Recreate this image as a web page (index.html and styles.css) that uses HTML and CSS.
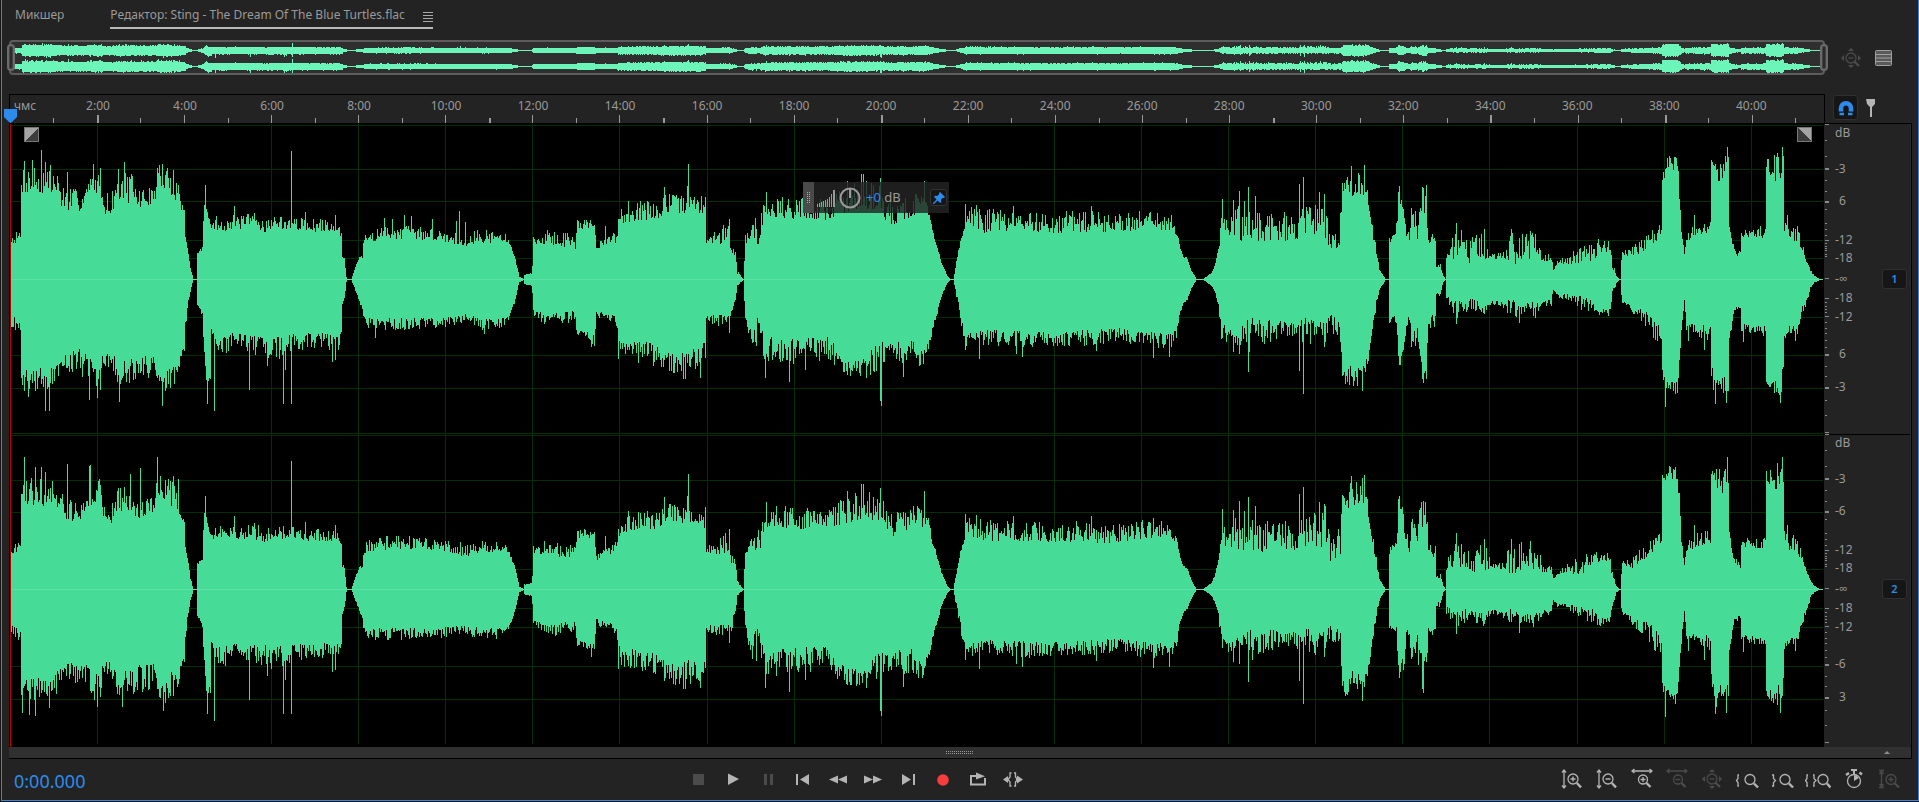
FILE: index.html
```html
<!DOCTYPE html>
<html lang="ru">
<head>
<meta charset="utf-8">
<title>Sting - The Dream Of The Blue Turtles.flac</title>
<link rel="stylesheet" href="styles.css">
</head>
<body>
<svg class="defs" aria-hidden="true">
  <symbol id="lens" viewBox="0 0 24 24"><circle cx="13" cy="12" r="5"/><path class="handle" d="M16.800 16L21 20.300"/></symbol>
  <symbol id="all-ways" viewBox="0 0 24 24">
    <circle cx="12" cy="12" r="5"/><path d="M9.500 12h5"/><path class="handle" d="M15.500 15.700L20 20"/>
    <path class="solid" d="M12 2l3 3H9zM12 22l3-3H9zM2 12l3-3v6zM22 12l-3-3v6z"/>
  </symbol>
</svg>
<main class="window">
  <nav class="tabs">
    <a class="tab" href="#mixer">Микшер</a>
    <div class="tab-active">
      <a class="tab" href="#editor">Редактор: Sting - The Dream Of The Blue Turtles.flac</a>
      <button class="plain" aria-label="Меню панели"><svg class="menu-icon" viewBox="0 0 10 12"><path d="M0 2.500h10M0 5.500h10M0 8.500h10M0 11.500h10"/></svg></button>
    </div>
  </nav>

  <section class="columns overview-row">
    <div class="overview">
      <svg class="overview-wave" viewBox="0 0 1814 31" preserveAspectRatio="none"><path id="mini1"/><path id="mini2"/></svg>
      <span class="grip grip-left"></span><span class="grip grip-right"></span>
    </div>
    <div class="overview-tools">
      <button class="plain dim" aria-label="Показать всё"><svg class="icon" viewBox="0 0 24 24"><use href="#all-ways"/></svg></button>
      <button class="plain" aria-label="Список"><svg class="list-icon" viewBox="0 0 17 16"><rect x=".5" y=".5" width="16" height="15" rx="1"/><path d="M0 4.500h17M0 8h17M0 11.500h17"/></svg></button>
    </div>
  </section>

  <section class="columns ruler-row">
    <div class="ruler">
      <ol class="times" id="times"><li class="unit">чмс</li></ol>
      <svg class="ticks" viewBox="0 0 1814 8" preserveAspectRatio="none"><path id="ticks"/></svg>
      <svg class="playhead" viewBox="0 0 13 14"><path d="M0 0h13v8l-6 6h-1l-6-6z"/></svg>
    </div>
    <div class="ruler-tools">
      <button class="magnet" aria-label="Привязка"><svg viewBox="0 0 16 16"><path class="arc" d="M3 11.500V8.200a5 5 0 0 1 10 0v3.300"/><path class="feet" d="M1.500 14h4.500M10 14h4.500"/></svg></button>
      <button class="plain" aria-label="Маркер"><svg class="marker" viewBox="0 0 9 18"><path d="M0 0h9v5l-3 3v10h-2v-10l-3-3z"/></svg></button>
    </div>
  </section>

  <section class="columns tracks">
    <div class="plot">
      <svg class="channel" viewBox="0 0 1814 310" preserveAspectRatio="none"><path class="grid" id="grid1"/><path class="wave" id="wave1"/><path class="axis" d="M1 155h1813v1H1z"/></svg>
      <svg class="channel" viewBox="0 0 1814 310" preserveAspectRatio="none"><path class="grid" id="grid2"/><path class="wave" id="wave2"/><path class="axis" d="M1 155h1813v1H1z"/></svg>
      <span class="cursor"></span>
      <button class="fade fade-in" aria-label="Нарастание"></button>
      <button class="fade fade-out" aria-label="Затухание"></button>
      <div class="hud">
        <span class="hud-grip"><i></i></span>
        <svg class="bars" viewBox="0 0 18 18"><path d="M0 15h1v3H0zM2 14h1v4H2zM4 13h1v5H4zM6 12h1v6H6zM8 11h1v7H8zM10 10h1v8h-1zM12 8h1v10h-1zM14 5h1v13h-1zM16 1h2v17h-2z"/></svg>
        <svg class="knob" viewBox="0 0 22 22"><circle cx="11" cy="11" r="9.500"/><path d="M11 2v9"/></svg>
        <span class="gain"><b>+0</b> dB</span>
        <button class="pin" aria-label="Закрепить"><svg viewBox="0 0 12 12"><path d="M7 0l5 5-1 1-1-.3-2 2.100.2 2.200-1 1-2.600-2.500L1 12H0v-1l3.500-3.600L1 4.800l1-1 2.200.2 2.100-2L6 1z"/></svg></button>
      </div>
    </div>
    <div class="scales">
      <div class="scale">
        <svg class="db-ticks" viewBox="0 0 6 310" preserveAspectRatio="none"><path id="db1"/></svg>
        <ul><li>dB<li>-3<li class="bare">6<li>-12<li>-18<li>-∞<li>-18<li>-12<li class="bare">6<li>-3</ul>
        <button class="badge">1</button>
      </div>
      <div class="scale">
        <svg class="db-ticks" viewBox="0 0 6 310" preserveAspectRatio="none"><path id="db2"/></svg>
        <ul><li>dB<li>-3<li>-6<li>-12<li>-18<li>-∞<li>-18<li>-12<li>-6<li class="bare">3</ul>
        <button class="badge">2</button>
      </div>
    </div>
  </section>
  <div class="splitter"><i class="dots"></i><svg class="caret" viewBox="0 0 6 3"><path d="M0 3l3-3 3 3z"/></svg></div>

  <footer class="footer">
    <output class="time">0:00.000</output>
    <div class="buttons">
      <button class="plain dim" aria-label="Стоп"><svg class="icon" viewBox="0 0 24 24"><path class="solid" d="M7 7h11v11H7z"/></svg></button>
      <button class="plain" aria-label="Воспроизвести"><svg class="icon" viewBox="0 0 24 24"><path class="solid" d="M7 6.500l11 5.500-11 6z"/></svg></button>
      <button class="plain dim" aria-label="Пауза"><svg class="icon" viewBox="0 0 24 24"><path class="solid" d="M8 7h3v11H8zM14 7h3v11h-3z"/></svg></button>
      <button class="plain" aria-label="В начало"><svg class="icon" viewBox="0 0 24 24"><path class="solid" d="M5 7h2v11H5zM18 7v11l-9-5.500z"/></svg></button>
      <button class="plain" aria-label="Назад"><svg class="icon" viewBox="0 0 24 24"><path class="solid" d="M12 8.500v8l-9-4zM21 8.500v8l-9-4z"/></svg></button>
      <button class="plain" aria-label="Вперёд"><svg class="icon" viewBox="0 0 24 24"><path class="solid" d="M3 8.500v8l9-4zM12 8.500v8l9-4z"/></svg></button>
      <button class="plain" aria-label="В конец"><svg class="icon" viewBox="0 0 24 24"><path class="solid" d="M6 7v11l9-5.500zM17 7h2v11h-2z"/></svg></button>
      <button class="plain record" aria-label="Запись"><svg class="icon" viewBox="0 0 24 24"><circle class="solid" cx="12" cy="13" r="5.800"/></svg></button>
      <button class="plain" aria-label="Повтор"><svg class="icon" viewBox="0 0 24 24"><path class="thick" d="M8 9H5v8.500h14V11"/><path class="thick" d="M8 9h4"/><path class="solid" d="M10 5.500l9 3.700-9 3.300z"/></svg></button>
      <button class="plain" aria-label="Пропуск выделения"><svg class="icon" viewBox="0 0 24 24"><path d="M10.500 6H9v4l-2 2.500 2 2.500v4h1.500M13 6h1.500v4l2 2.500-2 2.500v4H13"/><path class="solid" d="M2 12.500L7 9v7zM22 12.500L16 8.500v3h-1v2h1v3z"/></svg></button>
    </div>
    <div class="buttons zooms">
      <button class="plain" aria-label="Увеличить амплитуду"><svg class="icon" viewBox="0 0 24 24"><path d="M4 3v18M2 5.500L4 3l2 2.500M2 18.500L4 21l2-2.500M10.500 12h5M13 9.500v5"/><use href="#lens"/></svg></button>
      <button class="plain" aria-label="Уменьшить амплитуду"><svg class="icon" viewBox="0 0 24 24"><path d="M4 3v18M2 5.500L4 3l2 2.500M2 18.500L4 21l2-2.500M10.500 12h5"/><use href="#lens"/></svg></button>
      <button class="plain" aria-label="Увеличить время"><svg class="icon" viewBox="0 0 24 24"><path d="M2 4h20M4.500 2L2 4l2.500 2M19.500 2L22 4l-2.500 2M10.500 12.500h5M13 10v5"/><circle cx="13" cy="12.500" r="4.500"/><path class="handle" d="M16.500 16l4 4"/></svg></button>
      <button class="plain dim" aria-label="Уменьшить время"><svg class="icon" viewBox="0 0 24 24"><path d="M2 4h20M4.500 2L2 4l2.500 2M19.500 2L22 4l-2.500 2M10.500 12.500h5"/><circle cx="13" cy="12.500" r="4.500"/><path class="handle" d="M16.500 16l4 4"/></svg></button>
      <button class="plain dim" aria-label="Показать целиком"><svg class="icon" viewBox="0 0 24 24"><use href="#all-ways"/></svg></button>
      <button class="plain" aria-label="К началу выделения"><svg class="icon" viewBox="0 0 24 24"><path d="M4 8H3v3.500l-1.500 2L3 15.500V19h1"/><circle cx="15" cy="12.500" r="5"/><path class="handle" d="M19 16.500l4 4"/></svg></button>
      <button class="plain" aria-label="К концу выделения"><svg class="icon" viewBox="0 0 24 24"><path d="M2 8h1.500v3.500l2 2-2 2V19H2"/><circle cx="15" cy="12.500" r="5"/><path class="handle" d="M19 16.500l4 4"/></svg></button>
      <button class="plain" aria-label="К выделению"><svg class="icon wide-icon" viewBox="0 0 26 24"><path d="M3 8H2v3.500l-1.500 2L2 15.500V19h1M8 8h1v3.500l2 2-2 2V19H8"/><circle cx="18" cy="12.500" r="5"/><path class="handle" d="M22 16.500l3.500 4"/></svg></button>
      <button class="plain" aria-label="Таймер"><svg class="icon" viewBox="0 0 24 24"><circle cx="12" cy="14" r="6.500"/><path class="solid" d="M12 14V8a6 6 0 0 1 5 3zM9 2h6v2h-2v3h-2V4H9z"/><path class="handle" d="M4 8l3-2M17.500 5.500l2.500 2"/></svg></button>
      <button class="plain dim" aria-label="Масштаб по высоте"><svg class="icon" viewBox="0 0 24 24"><path d="M2 3.500h5M2 20.500h5M4.500 3.500v17M2.500 7l2-2.500 2 2.500M2.500 17l2 2.500 2-2.500M11.500 12.500h5M14 10v5"/><circle cx="14" cy="12.500" r="5"/><path class="handle" d="M17.800 16.500L22 20.500"/></svg></button>
    </div>
  </footer>
</main>
<script src="app.js"></script>
</body>
</html>
```
FILE: styles.css
```css
* { box-sizing: border-box; }
body {
  margin: 0;
  background: #161616;
  color: #9a9a9a;
  font: 12px/16px "Noto Sans", "Open Sans", sans-serif;
}
svg { display: block; }
button { padding: 0; border: 0; background: none; color: inherit; font: inherit; }
ul, ol { margin: 0; padding: 0; list-style: none; }
.defs { display: none; }

.window {
  display: flex;
  flex-direction: column;
  height: calc(100vh - 1px);
  min-height: 480px;
  margin-left: 1px;
  border: solid #3a84dc;
  border-width: 0 1px 1px;
  background: #232323;
}
.plain { display: flex; color: #b4b4b4; }
.dim { color: #4b4b4b; }
.icon { width: 24px; height: 24px; fill: none; stroke: currentColor; stroke-width: 1.3; }
.wide-icon { width: 26px; }
.solid { fill: currentColor; stroke: none; }
.handle { stroke-width: 2.4; }
.thick { stroke-width: 2; }

.tabs { display: flex; gap: 46px; height: 29px; padding: 7px 13px 0; }
.tab { color: inherit; text-decoration: none; white-space: nowrap; }
.tab-active { display: flex; gap: 18px; border-bottom: 2px solid #b8b8b8; }
.menu-icon { width: 10px; height: 12px; margin-top: 3px; stroke: #a8a8a8; }

.columns { display: grid; grid-template-columns: minmax(0, 1fr) 87px; margin: 0 6px 0 7px; }

.overview-row { margin-top: 11px; height: 35px; }
.overview {
  position: relative;
  border: 2px solid #5c5c5c;
  border-radius: 4px;
  background: #2f2f2f;
}
.overview-wave { width: 100%; height: 100%; fill: #6cf5b8; shape-rendering: crispEdges; }
.grip {
  position: absolute;
  top: 2px;
  bottom: 2px;
  width: 8px;
  border: 2px solid #6b6b6b;
  border-radius: 4px;
  background: #2b2b2b;
  box-shadow: inset 0 0 0 1px #444;
}
.grip-left { left: -4px; }
.grip-right { right: -5px; }
.overview-tools { display: flex; align-items: center; gap: 12px; padding-left: 14px; }
.list-icon { width: 17px; height: 16px; fill: #5a5a5a; stroke: #a0a0a0; }

.ruler-row { margin-top: 19px; height: 29px; }
.ruler { position: relative; display: flex; flex-direction: column; justify-content: space-between; border: 1px solid #000; border-bottom: 0; }
.times { display: flex; padding: 3px 0 0 1px; overflow: hidden; }
.times li { flex: 0 0 4.8%; text-align: center; }
.times .unit { flex-basis: 2.4%; padding-left: 3px; text-align: left; }
.ticks { width: 100%; height: 8px; fill: #9a9a9a; shape-rendering: crispEdges; }
.playhead { position: absolute; left: -6px; bottom: 0; width: 13px; height: 14px; fill: #2d8ceb; }
.ruler-tools { display: flex; gap: 8px; padding: 1px 0 0 8px; }
.magnet {
  display: grid;
  place-items: center;
  width: 25px;
  height: 25px;
  border: 1px solid #303030;
  border-radius: 3px;
  background: #161616;
}
.magnet svg { width: 16px; height: 16px; fill: none; stroke: #2d8ceb; }
.arc { stroke-width: 4.6; }
.feet { stroke-width: 2.4; }
.marker { width: 9px; height: 18px; margin-top: 4px; fill: #b4b4b4; }

.tracks { flex: 1; min-height: 0; border-top: 1px solid #000; border-right: 1px solid #000; }
.plot {
  position: relative;
  display: grid;
  grid-template-rows: minmax(0, 1fr) minmax(0, 1fr);
  padding: 0 1px 3px;
  background: #000;
}
.channel { width: 100%; height: 100%; shape-rendering: crispEdges; }
.grid { fill: #033003; }
.wave { fill: #46dc98; }
.axis { fill: #5be0a5; }
.cursor { position: absolute; top: 0; bottom: 0; left: 1px; width: 1px; background: #c00000; }
.fade { position: absolute; top: 3px; width: 15px; height: 15px; border: 1px solid #777; }
.fade-in { left: 15px; background: linear-gradient(135deg, #a4a4a4 50%, #3c3c3c 50%); }
.fade-out { right: 12px; background: linear-gradient(45deg, #3c3c3c 50%, #a4a4a4 50%); }
.hud {
  position: absolute;
  top: 58px;
  left: 43.75%;
  display: flex;
  align-items: center;
  width: 146px;
  height: 31px;
  background: rgba(36, 36, 36, .82);
}
.hud-grip { display: grid; place-items: center; align-self: stretch; width: 11px; margin-right: 3px; background: #4a4a4a; }
.hud-grip i {
  width: 3px;
  height: 12px;
  background: repeating-linear-gradient(#aaa 0 1px, transparent 1px 2px) left / 1px 100% no-repeat, repeating-linear-gradient(#aaa 0 1px, transparent 1px 2px) right / 1px 100% no-repeat;
}
.bars { width: 18px; height: 18px; margin-right: 4px; fill: #9a9a9a; }
.knob { width: 22px; height: 22px; margin-right: 5px; fill: none; stroke: #9a9a9a; stroke-width: 2; }
.gain { flex: 1; padding-bottom: 2px; font-size: 13px; }
.gain b { color: #2d8ceb; font-weight: 400; }
.pin { display: grid; place-items: center; width: 17px; height: 17px; margin-right: 2px; border: 1px solid #333; border-radius: 3px; background: #161616; }
.pin svg { width: 12px; height: 12px; fill: #2d8ceb; }

.scales { display: grid; grid-template-rows: minmax(0, 1fr) minmax(0, 1fr); padding-bottom: 3px; }
.scale { display: grid; grid-template-columns: 6px 1fr auto; border-right: 1px solid #2c2c2c; }
.scale + .scale { background: linear-gradient(#000, #000) top / 100% 1px no-repeat; }
.db-ticks { width: 6px; height: 100%; fill: #8a8a8a; shape-rendering: crispEdges; }
.scale ul {
  display: grid;
  grid-template-rows: 1fr 16px 20fr 16px 16fr 16px 23fr 16px 2fr 16px 5fr 16px 3fr 16px 3fr 16px 22fr 16px 17fr 16px 39fr;
  padding-left: 5px;
}
.scale li:nth-child(1) { grid-row: 2; }
.scale li:nth-child(2) { grid-row: 4; }
.scale li:nth-child(3) { grid-row: 6; }
.scale li:nth-child(4) { grid-row: 8; }
.scale li:nth-child(5) { grid-row: 10; }
.scale li:nth-child(6) { grid-row: 12; }
.scale li:nth-child(7) { grid-row: 14; }
.scale li:nth-child(8) { grid-row: 16; }
.scale li:nth-child(9) { grid-row: 18; }
.scale li:nth-child(10) { grid-row: 20; }
.scale .bare { padding-left: 4px; }
.badge {
  align-self: center;
  width: 25px;
  height: 20px;
  margin-right: 3px;
  border: 1px solid #303030;
  border-radius: 3px;
  background: #161616;
  color: #2d8ceb;
  font-weight: 600;
  font-size: 11px;
}

.splitter {
  display: grid;
  grid-template-columns: 1fr 28px 1fr;
  align-items: center;
  height: 12px;
  margin: 0 6px 0 7px;
  border: solid #000;
  border-width: 0 1px 1px 0;
  background: #303030;
}
.dots {
  grid-column: 2;
  height: 3px;
  background: repeating-linear-gradient(90deg, #999 0 1px, transparent 1px 2px) top / 100% 1px no-repeat, repeating-linear-gradient(90deg, #999 0 1px, transparent 1px 2px) bottom / 100% 1px no-repeat;
}
.caret { width: 6px; height: 3px; margin-right: 21px; justify-self: end; fill: #8c8c8c; }

.footer { display: grid; grid-template-columns: 36% auto 1fr; align-items: center; height: 41px; padding: 0 17px 2px 0; }
.time { padding: 4px 0 0 12px; color: #2d8ceb; font-size: 18px; line-height: 24px; }
.buttons { display: flex; gap: 11px; }
.zooms { justify-content: flex-end; }
.record { color: #f83c3c; }
```
FILE: app.js
```js
// Envelope of the recording: [x, top low, top high, bottom low, bottom high]
const envelope = [
  [11,35,45,36,48],[20,37,50,38,52],[21,85,115,88,112],[50,82,116,88,110],[58,82,105,80,105],[62,68,96,76,90],[80,68,88,68,95],
  [88,82,100,76,104],[100,88,112,86,118],[103,65,85,70,85],[112,66,90,72,90],[116,78,112,80,106],[130,76,108,80,106],
  [138,70,92,74,102],[154,76,92,74,104],[157,88,116,94,110],[164,88,114,94,116],[172,80,108,80,108],[178,78,100,84,98],
  [181,68,80,72,76],[184,66,70,66,72],[185,42,48,40,50],[188,24,26,20,24],[190,10,12,10,12],[193,0,0,0,0],[196,0,0,0,0],
  [197,24,28,22,26],[202,28,32,32,38],[203,55,60,55,60],[205,92,94,84,92],[206,70,72,100,104],[210,52,56,96,104],[211,50,56,48,52],
  [215,48,64,56,78],[226,48,62,56,76],[234,50,64,52,62],[250,50,66,55,74],[266,46,62,54,76],[272,50,64,58,84],[290,50,62,54,74],
  [320,46,60,52,68],[338,49,60,54,74],[341,40,50,52,55],[342,22,26,24,26],[344,20,22,16,20],[346,2,2,2,2],[347,0,0,0,0],
  [351,0,0,0,0],[356,14,16,12,14],[360,22,24,22,26],[362,20,22,28,29],[363,34,38,36,40],[366,36,48,38,50],[390,40,54,38,52],
  [410,40,54,38,50],[440,38,50,38,48],[464,32,46,34,44],[480,36,50,38,50],[503,36,48,38,48],[508,36,40,36,40],[514,22,25,22,25],
  [517,10,12,8,10],[519,2,2,2,2],[523,0,0,0,0],[524,4,5,4,5],[531,5,6,5,6],[532,12,13,13,14],[533,35,45,30,36],[548,34,50,34,48],
  [575,30,46,30,42],[577,56,74,54,58],[579,50,60,50,56],[594,51,60,54,66],[596,28,34,28,38],[606,34,44,32,40],[616,35,48,34,46],
  [618,50,58,50,58],[620,56,72,58,76],[640,58,80,60,84],[659,60,76,64,88],[664,66,86,70,92],[680,66,84,72,98],[700,66,84,66,92],
  [705,58,82,60,78],[706,36,42,35,42],[717,34,50,34,48],[728,36,58,34,46],[731,24,40,26,44],[735,24,28,20,22],[737,5,10,4,8],
  [740,3,4,2,3],[743,0,0,0,0],[745,35,45,35,45],[752,40,60,50,72],[758,34,66,30,72],[762,40,70,50,70],[764,62,88,56,90],
  [790,60,82,58,84],[830,58,82,56,80],[838,64,90,74,96],[862,70,100,80,98],[880,66,94,60,92],[890,52,80,64,80],[910,60,84,56,86],
  [918,66,92,72,92],[927,58,80,66,86],[931,50,66,56,64],[933,44,52,46,50],[938,30,32,30,34],[942,16,18,15,17],[948,3,3,3,3],
  [951,0,0,0,0],[954,0,0,0,0],[957,14,18,12,18],[960,30,35,26,34],[964,45,52,48,60],[967,54,72,54,68],[985,46,72,50,66],
  [1008,48,68,50,68],[1050,46,68,52,68],[1090,46,68,50,66],[1120,46,66,48,62],[1150,50,72,52,70],[1172,48,66,54,68],
  [1177,44,54,48,60],[1180,32,38,34,38],[1184,22,24,22,24],[1188,19,21,18,20],[1192,8,9,8,9],[1197,0,0,0,0],[1204,0,0,0,0],
  [1212,6,6,5,6],[1216,14,16,13,15],[1219,26,34,23,26],[1222,42,64,40,62],[1235,42,76,50,66],[1250,34,70,38,74],[1270,38,68,40,62],
  [1294,38,68,42,56],[1306,42,72,38,66],[1326,40,84,42,64],[1330,26,56,32,50],[1341,34,66,42,66],[1343,90,98,88,98],[1346,80,104,90,106],
  [1353,82,112,80,110],[1363,84,112,84,106],[1367,84,100,78,92],[1370,66,72,70,75],[1373,45,60,48,55],[1376,28,40,22,34],
  [1380,9,11,9,11],[1386,0,0,0,0],[1389,0,0,0,0],[1390,34,42,36,48],[1397,34,58,35,46],[1399,76,92,72,90],[1404,66,82,68,88],
  [1406,46,60,44,60],[1410,32,50,32,50],[1412,58,76,48,76],[1418,38,64,44,62],[1420,60,90,60,90],[1427,62,98,66,104],
  [1429,36,46,38,50],[1436,30,44,32,50],[1437,11,16,14,16],[1441,10,15,10,18],[1444,3,4,2,3],[1446,0,0,0,0],[1447,18,24,16,26],
  [1450,18,40,18,30],[1458,18,54,22,40],[1470,16,40,18,30],[1484,18,50,22,36],[1492,20,26,20,24],[1502,20,26,20,28],[1510,14,46,18,36],
  [1524,16,48,20,38],[1538,20,46,22,38],[1543,16,26,20,26],[1552,18,26,19,26],[1554,8,11,9,11],[1558,15,18,13,18],[1572,15,28,14,22],
  [1582,15,34,15,30],[1596,20,38,20,34],[1600,26,42,28,36],[1610,28,38,26,36],[1613,10,18,10,18],[1617,2,4,2,3],[1620,0,0,0,0],
  [1621,0,0,0,0],[1622,14,20,14,20],[1623,24,28,20,24],[1634,20,34,26,36],[1645,28,44,30,48],[1656,36,56,38,62],[1662,46,60,50,66],
  [1663,94,114,90,100],[1667,108,122,100,112],[1678,108,122,100,114],[1680,76,100,75,86],[1682,46,52,48,54],[1685,22,26,18,22],
  [1687,38,46,44,50],[1698,42,58,44,56],[1711,46,58,46,62],[1712,112,124,84,100],[1716,108,122,100,122],[1720,90,120,94,110],
  [1729,104,126,92,122],[1730,48,60,56,62],[1735,26,32,28,32],[1741,20,28,24,32],[1742,42,50,44,52],[1765,40,54,46,56],
  [1766,48,54,50,56],[1767,102,122,100,110],[1776,98,124,100,114],[1784,102,128,86,122],[1785,48,60,54,60],[1790,38,58,46,54],
  [1798,36,54,46,56],[1803,26,36,26,36],[1808,15,18,18,24],[1811,7,9,6,8],[1815,3,4,2,3],[1820,0,0,0,0],[1824,0,0,0,0]
];

// Single peaks: [x, top, bottom]; zero leaves the envelope as it is
const peaks = [
  [24,118,0],[28,0,117],[32,119,0],[41,129,0],[45,117,131],[49,108,131],[67,107,0],[93,115,0],[89,0,120],[97,0,118],[119,0,122],[124,117,0],
  [159,114,0],[162,115,126],[173,109,0],[207,0,124],[214,0,131],[234,73,0],[249,0,110],[254,66,0],[267,0,86],[283,0,124],[285,0,90],
  [291,128,124],[305,67,0],[332,0,82],[335,64,80],[375,0,58],[384,61,0],[392,60,0],[404,64,0],[411,63,0],[432,60,0],[456,58,0],[459,68,0],
  [465,57,0],[484,0,54],[591,0,67],[605,53,0],[618,60,79],[628,78,0],[664,92,0],[669,85,0],[683,0,99],[685,0,99],[687,93,0],[688,115,0],
  [700,0,98],[705,82,78],[729,60,53],[765,0,98],[766,87,0],[789,0,102],[805,0,90],[847,98,95],[861,105,0],[863,105,0],[866,0,98],
  [880,101,121],[881,0,126],[903,0,97],[925,98,0],[966,75,70],[977,74,0],[980,0,79],[1014,73,0],[1017,0,74],[1023,0,77],[1092,73,0],
  [1097,0,71],[1154,0,78],[1170,0,77],[1223,80,0],[1234,79,72],[1240,88,74],[1245,78,0],[1249,92,92],[1256,83,0],[1300,95,91],
  [1304,102,114],[1320,87,0],[1325,85,67],[1352,113,0],[1363,0,111],[1365,114,0],[1400,93,0],[1423,0,99],[1424,0,103],[1457,56,44],
  [1485,50,0],[1512,50,0],[1520,0,43],[1531,48,0],[1666,0,127],[1670,123,0],[1676,122,114],[1689,0,61],[1695,64,0],[1705,0,70],
  [1716,0,124],[1727,0,123],[1728,132,0],[1744,0,62],[1778,126,0],[1781,0,123],[1783,132,0],[1788,64,0],[1796,0,61]
];

// The second channel has its own loudest moments in the opening song, and a level third song
const peaksRight = peaks.filter(([x]) => x > 190 && (x < 345 || x > 520)).concat([
  [24,132,0],[22,0,123],[29,0,125],[35,122,126],[41,122,0],[45,117,0],[49,0,118],[67,125,0],[89,123,0],[90,124,0],[97,0,117],
  [122,0,117],[130,115,0],[140,121,0],[157,132,0],[163,0,121],[168,110,0],[173,113,0],[178,110,0]
]);

const plotLeft = 10;

function noise(seed) {
  let s = seed;
  return () => {
    s = (s * 1664525 + 1013904223) % 4294967296;
    return s / 4294967296;
  };
}

function columns(seed, marks) {
  const rnd = noise(seed);
  const out = [];
  let i = 0;
  for (let x = 11; x < 1824; x++) {
    while (i < envelope.length - 2 && envelope[i + 1][0] <= x) i++;
    const a = envelope[i], b = envelope[i + 1];
    const t = (x - a[0]) / (b[0] - a[0]);
    const at = k => a[k] + (b[k] - a[k]) * t;
    const top = at(1) + (at(2) - at(1)) * Math.pow(rnd(), 1.2);
    const bottom = at(3) + (at(4) - at(3)) * Math.pow(rnd(), 1.2);
    out.push({ x: x - plotLeft, top: Math.round(top), bottom: Math.round(bottom) });
  }
  for (const [x, top, bottom] of marks) {
    const c = out[x - 11];
    if (top) c.top = top;
    if (bottom) c.bottom = bottom;
  }
  return out;
}

function wavePath(cols, middle, scale) {
  return cols.map(c => {
    const top = Math.round(c.top * scale), bottom = Math.round(c.bottom * scale);
    return `M${c.x} ${middle - top}h1v${top + bottom + 1}h-1z`;
  }).join("");
}

const set = (id, d) => document.getElementById(id).setAttribute("d", d);
const left = columns(7, peaks), right = columns(91, peaksRight);
set("wave1", wavePath(left, 155, 1));
set("wave2", wavePath(right, 155, 1));
set("mini1", wavePath(left, 8, 0.052));
set("mini2", wavePath(right, 24, 0.052));

// Time ruler: a mark each minute, a label every second one
const minuteX = m => Math.floor(m * 43.55 + 0.3);
const wide = [2, 11, 15, 20, 29, 34, 38];
let ticks = "";
for (let m = 0; m <= 41; m++) {
  const x = minuteX(m);
  const y = m % 2 ? 3 : 0;
  ticks += `M${x} ${y}h${wide.includes(m) ? 2 : 1}V8H${x}z`;
}
set("ticks", ticks);
for (let m = 2; m <= 40; m += 2) {
  const li = document.createElement("li");
  li.textContent = m + ":00";
  document.getElementById("times").append(li);
}

let verticals = "";
for (let m = 2; m <= 40; m += 2) {
  if (m !== 4 && m !== 22) verticals += `M${minuteX(m)} 0h1v310h-1z`;
}
const horizontals = rows => rows.map(y => `M1 ${y}h1813v1H1z`).join("");
set("grid1", verticals + horizontals([1, 45, 77, 116, 134, 193, 231, 264, 309]));
set("grid2", verticals + horizontals([1, 46, 78, 135, 174, 193, 232, 265]));

const major = [44, 77, 230, 263];
const medium = [0, 116, 154, 174, 192, 308];
const minor = [16, 32, 56, 67, 85, 99, 105, 111, 119, 122, 124, 126, 130, 132, 178, 182, 185, 188, 198, 204, 209, 216, 223, 242, 252, 276, 291];
const dbTicks =
  major.map(y => `M1 ${y}h4v2h-4z`).join("") +
  medium.map(y => `M1 ${y}h4v1h-4z`).join("") +
  minor.map(y => `M1 ${y}h2v1h-2z`).join("");
set("db1", dbTicks);
set("db2", dbTicks);
```
